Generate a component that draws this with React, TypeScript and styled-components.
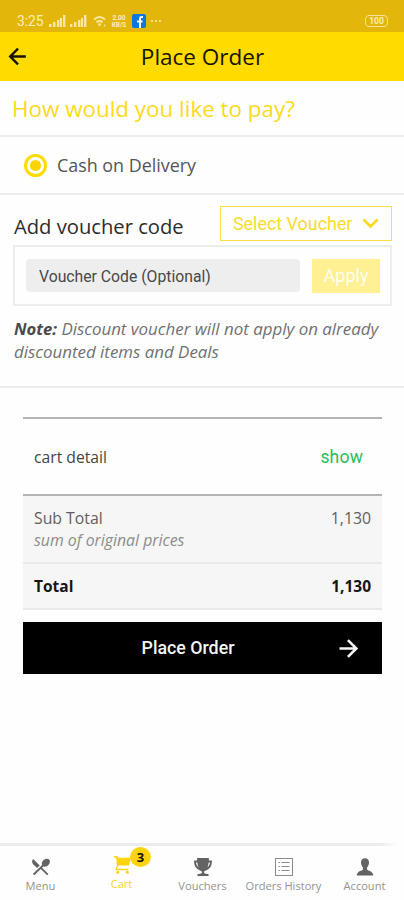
import React from "react";
import styled, { createGlobalStyle, css } from "styled-components";
import { IoMdRestaurant, IoMdTrophy } from "react-icons/io";

const yellow = "#ffdb00";

const GlobalStyle = createGlobalStyle`
  *, *::before, *::after { box-sizing: border-box; }
  html, body { margin: 0; background: #fefefe; }
  button, input { font: inherit; border: 0; padding: 0; margin: 0; }
`;

const Screen = styled.div`
  width: 404px;
  height: 900px;
  overflow: hidden;
  display: flex;
  flex-direction: column;
  background: #fefefe;
  color: #2c2c2c;
  font-family: "Open Sans", sans-serif;
  white-space: nowrap;
`;

const StatusBar = styled.div`
  height: 32px;
  flex: none;
  display: flex;
  align-items: center;
  padding: 10px 16px 0 17px;
  background: #e3b60c;
  color: #fbeeb8;
  font: 400 13.8px/20px Roboto, sans-serif;
`;

const Clock = styled.span`
  width: 32px;
`;

const StatusIcon = styled.svg<{ $gap?: number }>`
  display: block;
  flex: none;
  margin-right: ${(p) => p.$gap ?? 2}px;
`;

const NetSpeed = styled.span`
  display: flex;
  flex-direction: column;
  align-items: center;
  gap: 1px;
  width: 16px;
  margin-right: 5px;
  font-size: 6.5px;
  font-weight: 700;
  line-height: 6px;
`;

const Facebook = styled.span`
  display: flex;
  width: 14px;
  height: 14px;
  margin-right: 5px;
  background: #0878e0;
  border-radius: 2px;
`;

const More = styled.span`
  display: flex;
  gap: 2px;
  &::before, &::after, i { content: ""; width: 2px; height: 2px; background: #f6dc83; }
`;

const Battery = styled.span`
  margin-left: auto;
  width: 23px;
  height: 12px;
  border: 1px solid #f6e2a0;
  border-radius: 4px;
  font-size: 8.5px;
  font-weight: 700;
  line-height: 10px;
  text-align: center;
`;

const Header = styled.header`
  height: 49px;
  flex: none;
  display: grid;
  grid-template-columns: 40px 1fr 44px;
  align-items: center;
  padding-left: 5px;
  background: ${yellow};
  color: #161400;
`;

const ArrowSvg = styled.svg<{ $size: number }>`
  display: block;
  width: ${(p) => p.$size}px;
  height: ${(p) => p.$size}px;
  fill: none;
  stroke: currentColor;
  stroke-width: 2.3;
`;

const BackButton = styled.button`
  background: none;
  color: inherit;
  height: 27px;
`;

const Title = styled.h1`
  margin: 0;
  font-size: 22.5px;
  font-weight: 400;
  line-height: 30px;
  text-align: center;
`;

const Question = styled.h2`
  margin: 0;
  height: 56px;
  flex: none;
  padding-left: 12px;
  border-bottom: 2px solid #ececec;
  color: #fbda1c;
  font-size: 22.4px;
  font-weight: 400;
  line-height: 55px;
`;

const Option = styled.label`
  height: 58px;
  flex: none;
  display: flex;
  align-items: center;
  gap: 10px;
  padding: 0 24px 0 24px;
  border-bottom: 2px solid #ececec;
  font-size: 17.9px;
  color: #555;
`;

const Radio = styled.span`
  width: 23px;
  height: 23px;
  display: grid;
  place-items: center;
  border: 3px solid ${yellow};
  border-radius: 50%;
  &::after {
    content: "";
    width: 11px;
    height: 11px;
    border-radius: 50%;
    background: #fdd400;
  }
`;

const VoucherSection = styled.section`
  height: 193px;
  flex: none;
  padding: 11px 12px 0 13px;
  border-bottom: 2px solid #ececec;
`;

const VoucherHead = styled.div`
  display: flex;
  justify-content: space-between;
  height: 35px;
`;

const VoucherTitle = styled.h3`
  margin: 0;
  padding-left: 1px;
  font-size: 20.2px;
  font-weight: 400;
  line-height: 40px;
`;

const SelectVoucher = styled.button`
  display: flex;
  align-items: center;
  gap: 10px;
  width: 172px;
  height: 35px;
  padding: 0 0 0 12px;
  border: 1.5px solid #f8df4a;
  background: #fefefe;
  color: #f9dc2e;
  font: 400 17.9px/31px Roboto, sans-serif;
`;

const VoucherBox = styled.div`
  display: flex;
  align-items: center;
  gap: 12px;
  height: 61px;
  margin-top: 4px;
  padding: 0 10px 0 11px;
  border: 2px solid #ededed;
`;

const VoucherInput = styled.input`
  width: 274px;
  height: 33px;
  padding: 1px 13px 0;
  border-radius: 4px;
  background: #eeeeee;
  color: #333;
  font: 400 15.75px Roboto, sans-serif;
  &::placeholder { color: #484848; opacity: 1; }
`;

const Apply = styled.button`
  width: 68px;
  height: 34px;
  background: #fff093;
  color: #fffef0;
  font: 400 18px/34px Roboto, sans-serif;
`;

const Note = styled.p`
  margin: 11px 0 0;
  padding-left: 1px;
  color: #717171;
  font-size: 16.9px;
  font-style: italic;
  line-height: 23px;
  b { color: #4a4a4a; font-size: 16.6px; }
`;

const Cart = styled.section`
  width: 359px;
  margin: 29px 0 0 23px;
  flex: none;
`;

const CartDetail = styled.div`
  height: 79px;
  display: flex;
  align-items: center;
  justify-content: space-between;
  padding: 0 19px 0 11px;
  border-top: 2px solid #b4b4b4;
  border-bottom: 2px solid #b4b4b4;
  font-size: 15.7px;
  color: #444;
`;

const Show = styled.button`
  background: none;
  color: #29bd58;
  font: 400 17.5px/20px Roboto, sans-serif;
  letter-spacing: 0.2px;
`;

const SummaryRow = styled.div<{ $strong?: boolean }>`
  display: flex;
  justify-content: space-between;
  height: ${(p) => (p.$strong ? 46 : 68)}px;
  padding: 11px 11px 0;
  border-bottom: 2px solid #e9e9e9;
  background: #f6f6f6;
  font-size: 15.8px;
  line-height: 22px;
  color: #606060;
  ${(p) =>
    p.$strong &&
    css`
      color: #161616;
      font-weight: 700;
      font-size: 15.5px;
    `}
`;

const Hint = styled.div`
  color: #8c8c8c;
  font-style: italic;
`;

const PlaceOrder = styled.button`
  display: grid;
  grid-template-columns: 46px 1fr 75px;
  align-items: center;
  width: 359px;
  height: 52px;
  margin: 12px 0 0 23px;
  flex: none;
  background: #000;
  color: #f5f5f5;
  font: 500 17.8px/24px Roboto, sans-serif;
  span { grid-column: 2; }
  svg { margin-left: 28px; }
`;

const TabBar = styled.nav`
  display: flex;
  height: 57px;
  width: 404px;
  flex: none;
  margin-top: auto;
  border-top: 3px solid #ececec;
  border-image: linear-gradient(to right, #ececec 94%, #fefefe 98%) 1;
`;

const Tab = styled.a<{ $active?: boolean }>`
  position: relative;
  width: 81px;
  flex: none;
  display: flex;
  flex-direction: column;
  align-items: center;
  padding-top: ${(p) => (p.$active ? 8 : 10)}px;
  color: ${(p) => (p.$active ? "#fbd51c" : "#929292")};
  font-size: 11.1px;
  line-height: 16px;
  svg { display: block; width: 22px; height: 22px; color: ${(p) => (p.$active ? "#fdd30d" : "#636363")}; }
`;

const Badge = styled.span`
  position: absolute;
  top: 1px;
  left: 49px;
  width: 21px;
  height: 20px;
  border-radius: 50%;
  background: #fdd30d;
  color: #111;
  font-size: 13px;
  font-weight: 700;
  line-height: 20px;
  text-align: center;
`;

const BackArrow = () => (
  <ArrowSvg $size={25} viewBox="0 0 24 24">
    <path d="M20 12H5.500M12.500 4.500 5 12l7.500 7.500" />
  </ArrowSvg>
);

const ForwardArrow = () => (
  <ArrowSvg $size={27} viewBox="0 0 24 24">
    <path d="M4 12h14.500M11.500 4.500 19 12l-7.500 7.500" />
  </ArrowSvg>
);

const Signal = ({ gap }: { gap: number }) => (
  <StatusIcon $gap={gap} width="17" height="12" viewBox="0 0 17 12" fill="#f8e7a8">
    <rect x="0" y="9" width="2.4" height="3" />
    <rect x="4" y="7" width="2.4" height="5" />
    <rect x="8" y="5" width="2.4" height="7" />
    <rect x="11" y="3" width="2" height="9" />
    <rect x="14" y="0" width="2.4" height="12" />
  </StatusIcon>
);

const CartIcon = () => (
  <svg viewBox="0 0 22 22" fill="currentColor">
    <path d="M3 2h3.500l.7 1.700H20L17.800 11.500H7.500L6 14.800H17.500v1.500H4.200L6 11.500 5.200 3.500H3z" />
    <circle cx="6.800" cy="18.300" r="1.500" />
    <circle cx="16.200" cy="18.300" r="1.500" />
  </svg>
);

const PersonIcon = () => (
  <svg viewBox="0 0 22 22" fill="currentColor">
    <path d="M11 2.200c2.600 0 4 1.700 4 4.200 0 2-.8 3.700-1.900 4.900v2.100c.5 1.400 6.200 1.500 6.200 6.200H2.700c0-4.700 5.700-4.800 6.200-6.200v-2.100C7.800 10.100 7 8.400 7 6.400c0-2.500 1.400-4.200 4-4.200z" />
  </svg>
);

const ListIcon = () => (
  <svg viewBox="0 0 22 22" fill="none" stroke="#8c8c8c" strokeWidth="1">
    <rect x="2.5" y="2.5" width="17" height="17" />
    <path d="M5.5 6.500h1.500M8.500 6.500h8M5.500 10.500h1.500M8.500 10.500h8M5.500 14.500h1.500M8.500 14.500h8" />
  </svg>
);

const tabs = [
  { label: "Menu", icon: <IoMdRestaurant /> },
  { label: "Cart", icon: <CartIcon />, badge: 3 },
  { label: "Vouchers", icon: <IoMdTrophy /> },
  { label: "Orders History", icon: <ListIcon /> },
  { label: "Account", icon: <PersonIcon /> },
];

export default function App() {
  return (
    <>
      <GlobalStyle />
      <Screen>
        <StatusBar>
          <Clock>3:25</Clock>
          <Signal gap={4} />
          <Signal gap={6} />
          <StatusIcon $gap={4} width="14" height="12" viewBox="0 0 14 12" fill="none" stroke="#f8e7a8" strokeWidth="2">
            <path d="M1 4.500Q6.500 -.5 12 4.500M3.500 7.200Q6.500 4.800 9.500 7.200" />
            <path d="M5.500 9h2l-1 1.500zM11.500 9.500v2" strokeWidth="1.200" />
          </StatusIcon>
          <NetSpeed>
            <span>2.00</span>
            <span>KB/S</span>
          </NetSpeed>
          <Facebook>
            <svg width="14" height="14" viewBox="0 0 14 14" fill="none" stroke="#fff" strokeWidth="2">
              <path d="M11 3H9.500Q8 3 8 4.500V14M5 7.500h5.500" />
            </svg>
          </Facebook>
          <More><i /></More>
          <Battery>100</Battery>
        </StatusBar>
        <Header>
          <BackButton aria-label="Back">
            <BackArrow />
          </BackButton>
          <Title>Place Order</Title>
        </Header>
        <Question>How would you like to pay?</Question>
        <Option>
          <Radio />
          Cash on Delivery
        </Option>
        <VoucherSection>
          <VoucherHead>
            <VoucherTitle>Add voucher code</VoucherTitle>
            <SelectVoucher>
              Select Voucher
              <svg width="17" height="11" viewBox="0 0 17 11" fill="none" stroke="#fcd61a" strokeWidth="2.6">
                <path d="M1.500 1.500 8.500 8.500 15.500 1.500" />
              </svg>
            </SelectVoucher>
          </VoucherHead>
          <VoucherBox>
            <VoucherInput placeholder="Voucher Code (Optional)" />
            <Apply>Apply</Apply>
          </VoucherBox>
          <Note>
            <b>Note:</b> Discount voucher will not apply on already
            <br />
            discounted items and Deals
          </Note>
        </VoucherSection>
        <Cart>
          <CartDetail>
            <span>cart detail</span>
            <Show>show</Show>
          </CartDetail>
          <SummaryRow>
            <div>
              Sub Total
              <Hint>sum of original prices</Hint>
            </div>
            <span>1,130</span>
          </SummaryRow>
          <SummaryRow $strong>
            <span>Total</span>
            <span>1,130</span>
          </SummaryRow>
        </Cart>
        <PlaceOrder>
          <span>Place Order</span>
          <ForwardArrow />
        </PlaceOrder>
        <TabBar>
          {tabs.map((tab) => (
            <Tab key={tab.label} $active={tab.badge !== undefined}>
              {tab.icon}
              {tab.label}
              {tab.badge !== undefined && <Badge>{tab.badge}</Badge>}
            </Tab>
          ))}
        </TabBar>
      </Screen>
    </>
  );
}
